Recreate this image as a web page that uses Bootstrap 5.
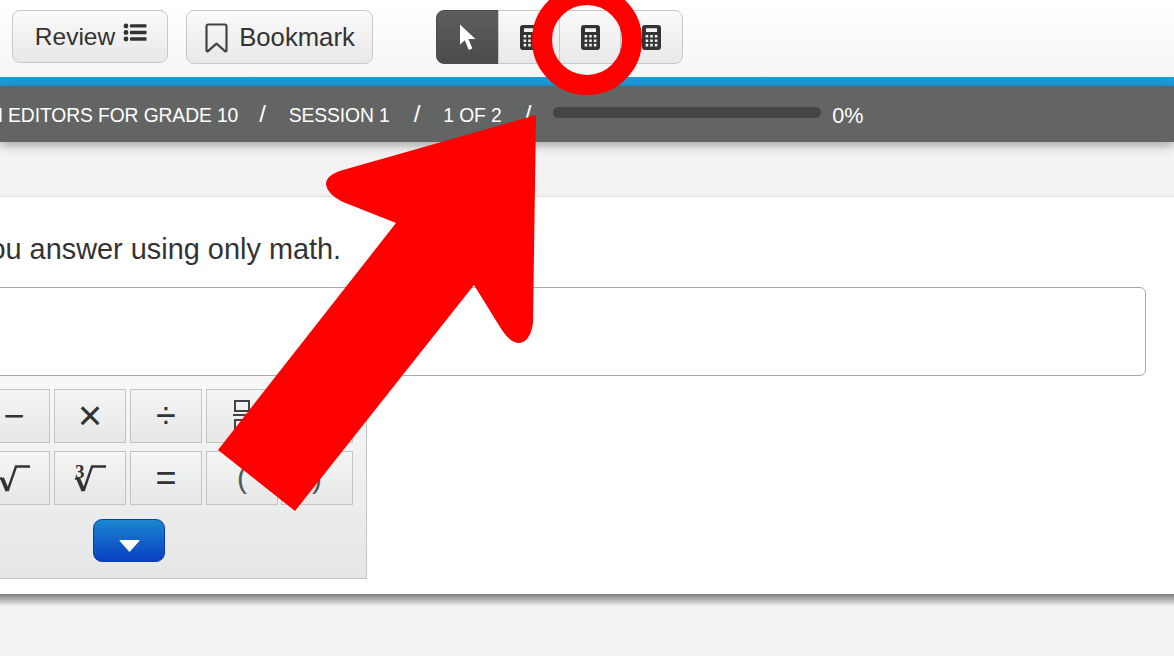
<!DOCTYPE html>
<html lang="en">
<head>
<meta charset="utf-8">
<title>Test player</title>
<link rel="stylesheet" href="https://cdn.jsdelivr.net/npm/bootstrap@5.3.0/dist/css/bootstrap.min.css">
<style>
html,body{margin:0;height:656px;overflow:hidden}
body{font-family:"Liberation Sans",Arial,sans-serif;color:#333;
 background-color:#f3f3f3;
 background-image:radial-gradient(circle at 2px 2px,#eeeeee .8px,transparent 1.2px),radial-gradient(circle at 6px 6px,#f7f7f7 .8px,transparent 1.2px);
 background-size:8px 8px}
.stage{position:relative;width:1174px;height:656px;overflow:hidden}
.topbar{height:77px;background:linear-gradient(#fff,#f4f6f6);padding:10px 12px 0}
.tbtn{--bs-btn-color:#333;--bs-btn-border-color:#c8c8c8;--bs-btn-hover-color:#333;--bs-btn-hover-border-color:#c8c8c8;
 height:53px;border-radius:8px;padding:0;background:linear-gradient(#fafafa,#e8e8e8);font-size:25px;line-height:1;color:#333}
.tbtn-review{width:156px;margin-right:18px;font-size:24.5px;padding:2px 0 0 2px}
.tbtn-mark{width:187px;height:54px;font-size:25.7px;padding:2px 0 0 2px}
.ic-list{margin-bottom:11px}
.ic-mark{margin:0 10px 0 -2px}
.modegroup{margin-left:63px;height:54px}
.modegroup .btn{width:62px;height:54px;padding:0;border-color:#c8c8c8;background:linear-gradient(#fafafa,#e8e8e8);border-radius:0}
.modegroup .btn:first-child{width:63px;background:linear-gradient(#5e5e5e,#4b4b4b);border-color:#4b4b4b;border-radius:8px 0 0 8px}
.modegroup .btn:last-child{width:63px;border-radius:0 8px 8px 0}
.bluebar{height:9px;background:#1d9bdc}
.crumbbar{height:56px;background:#636564;color:#fff;font-size:19.3px;box-shadow:0 3px 10px rgba(0,0,0,.35);position:relative}
.crumbs{margin-left:-11px;white-space:nowrap;letter-spacing:-.1px;height:56px;padding-top:4px}
.crumb-sep{font-size:24px;margin:0 23px 4px 21px}
.crumbs .sep-two{margin:0 23px 4px 24px}
.crumbs .sep-last{margin:0 22px 4px 23px}
.pbar{--bs-progress-bg:#454545;--bs-progress-border-radius:6px;--bs-progress-bar-bg:#1d9bdc;width:268px;height:11px;margin:0 11px 7px 0}
.pct{font-size:21.6px}
.sheet{margin-top:54px;height:398px;background:#fff;border-top:1px solid #dedede;position:relative;padding-top:36px}
.sheet::after{content:"";position:absolute;left:0;right:0;top:100%;height:12px;background:linear-gradient(rgba(0,0,0,.48),rgba(0,0,0,.02))}
.question{margin:0 0 0 -25px;font-size:28.9px;line-height:33px;color:#333;white-space:nowrap}
.answer{margin:21px 28px 0 -10px;width:auto;height:89px;border:1px solid #aaa;border-radius:6px;background:#fff}
.keypad{width:368px;height:203px;margin-left:-1px;margin-top:0;border:1px solid #c4c4c4;border-width:0 1px 1px 0;background:linear-gradient(#f7f8f8,#e6e6e6);padding-top:13px;overflow:hidden}
.keygrid{display:grid;grid-template-columns:repeat(5,72px);grid-auto-rows:54px;column-gap:4px;row-gap:8px;margin-left:-21px}
.keyc{display:flex;align-items:center;justify-content:center;border:1px solid #c4c4c4;background:linear-gradient(#f4f5f5,#e7e7e7);color:#333;font-size:36px;line-height:1;position:relative}
.keyc:nth-child(5n){margin-left:-1px;margin-right:1px}
.keyc sup{font-family:"Liberation Serif",serif;font-weight:700;font-size:19px;position:absolute;left:20px;top:10px;line-height:1}
.keyc-times{font-size:42px}
.paren{font-size:30px;color:#555;font-weight:300}
.morebtn{--bs-btn-border-color:#0c3bb0;width:72px;height:43px;margin:14px 0 0 94px;padding:10px 0 0;border-radius:9px;background:linear-gradient(#1b87cf,#0a3fc2);display:flex;align-items:center;justify-content:center}
.overlay{position:absolute;left:0;top:0;pointer-events:none}
</style>
</head>
<body>
<div class="stage">
  <header class="topbar d-flex align-items-start">
    <button type="button" class="btn tbtn tbtn-review d-flex align-items-center justify-content-center">Review
      <svg class="ms-2 ic-list" width="24" height="19" viewBox="0 0 24 19"><g fill="#333"><circle cx="3" cy="3" r="2.4"/><circle cx="3" cy="9.5" r="2.4"/><circle cx="3" cy="16" r="2.4"/><rect x="7" y="1.2" width="16.5" height="3.4" rx=".8"/><rect x="7" y="7.8" width="16.5" height="3.4" rx=".8"/><rect x="7" y="14.3" width="16.5" height="3.4" rx=".8"/></g></svg>
    </button>
    <button type="button" class="btn tbtn tbtn-mark d-flex align-items-center justify-content-center">
      <svg class="ic-mark" width="25" height="30" viewBox="0 0 25 30"><path d="M2.5 3.2a1.7 1.7 0 0 1 1.7-1.7h16.6a1.7 1.7 0 0 1 1.7 1.7v24.2a.9.9 0 0 1-1.5.7l-8.5-7.4-8.5 7.4a.9.9 0 0 1-1.5-.7z" fill="none" stroke="#444" stroke-width="2.2" stroke-linejoin="round"/></svg>Bookmark
    </button>
    <div class="btn-group modegroup" role="group" aria-label="Tools">
      <button type="button" class="btn" aria-label="Pointer"><svg width="18" height="27" viewBox="0 0 18 27"><path d="M1 0.5V20.5L5.8 16.3L9.8 26L13.4 24.4L9.4 15H16.4z" fill="#fff"/></svg></button>
      <button type="button" class="btn" aria-label="Calculator"><svg width="19" height="25" viewBox="0 0 19 25"><use href="#calc"/></svg></button>
      <button type="button" class="btn" aria-label="Calculator"><svg width="19" height="25" viewBox="0 0 19 25"><use href="#calc"/></svg></button>
      <button type="button" class="btn" aria-label="Calculator"><svg width="19" height="25" viewBox="0 0 19 25"><use href="#calc"/></svg></button>
    </div>
  </header>
  <div class="bluebar"></div>
  <nav class="crumbbar">
    <div class="crumbs d-flex align-items-center">
      <span>N EDITORS FOR GRADE 10</span><span class="crumb-sep">/</span><span>SESSION 1</span><span class="crumb-sep sep-two">/</span><span>1 OF 2</span><span class="crumb-sep sep-last">/</span>
      <div class="progress pbar" role="progressbar" aria-valuenow="0" aria-valuemin="0" aria-valuemax="100"><div class="progress-bar w-0"></div></div>
      <span class="pct">0%</span>
    </div>
  </nav>
  <main class="sheet">
    <p class="question">you answer using only math.</p>
    <div class="answer"></div>
    <div class="keypad">
      <div class="keygrid">
        <div class="keyc">−</div>
        <div class="keyc keyc-times">×</div>
        <div class="keyc">÷</div>
        <div class="keyc"><svg width="20" height="32" viewBox="0 0 20 32"><g fill="none" stroke="#444" stroke-width="2"><rect x="3" y="1" width="14" height="10"/><path d="M1 15H19"/><rect x="3" y="20" width="14" height="11"/></g></svg></div>
        <div class="keyc"></div>
        <div class="keyc"><svg width="36" height="30" viewBox="0 0 36 30"><path d="M3 16l3 -1" fill="none" stroke="#333" stroke-width="2"/><path d="M6 15l5.500 13" fill="none" stroke="#333" stroke-width="4"/><path d="M11.500 28L20 3.500H34" fill="none" stroke="#333" stroke-width="2.400"/></svg></div>
        <div class="keyc"><sup>3</sup><svg width="36" height="30" viewBox="0 0 36 30"><path d="M3 16l3 -1" fill="none" stroke="#333" stroke-width="2"/><path d="M6 15l5.500 13" fill="none" stroke="#333" stroke-width="4"/><path d="M11.500 28L20 3.500H34" fill="none" stroke="#333" stroke-width="2.400"/></svg></div>
        <div class="keyc">=</div>
        <div class="keyc paren">(</div>
        <div class="keyc paren">)</div>
      </div>
      <button type="button" class="btn morebtn" aria-label="More keys"><svg width="21" height="12" viewBox="0 0 21 12"><path d="M1 0H20Q21 0 20.300 1L11 11.500Q10.500 12 10 11.500L.7 1Q0 0 1 0z" fill="#fff"/></svg></button>
    </div>
  </main>
  <svg class="overlay" width="1174" height="656" viewBox="0 0 1174 656" aria-hidden="true">
    <defs>
      <symbol id="calc" viewBox="0 0 19 25"><path fill-rule="evenodd" fill="#333" d="M3 0H16a3 3 0 0 1 3 3V22a3 3 0 0 1-3 3H3a3 3 0 0 1-3-3V3a3 3 0 0 1 3-3zM4 3.200V7H15V3.200zM3.600 10v2.600H6.200V10zM8.200 10v2.600H10.800V10zM12.800 10v2.600H15.400V10zM3.600 14.400V17H6.200V14.400zM8.200 14.400V17H10.800V14.400zM12.800 14.400V17H15.400V14.400zM3.600 18.800v2.600H6.200V18.800zM8.200 18.800v2.600H10.800V18.800zM12.800 18.800v2.600H15.400V18.800z"/></symbol>
    </defs>
    <circle cx="587" cy="40" r="45" fill="none" stroke="#ff0000" stroke-width="20"/>
    <path fill="#ff0000" d="M536 115L343 170Q326 175 326 184Q327 194 343 202L396 223L218 450L295 511L474 285L500 327Q510 343 518 343Q530 343 533 323z"/>
  </svg>
</div>
<script src="https://cdn.jsdelivr.net/npm/bootstrap@5.3.0/dist/js/bootstrap.bundle.min.js"></script>
</body>
</html>
